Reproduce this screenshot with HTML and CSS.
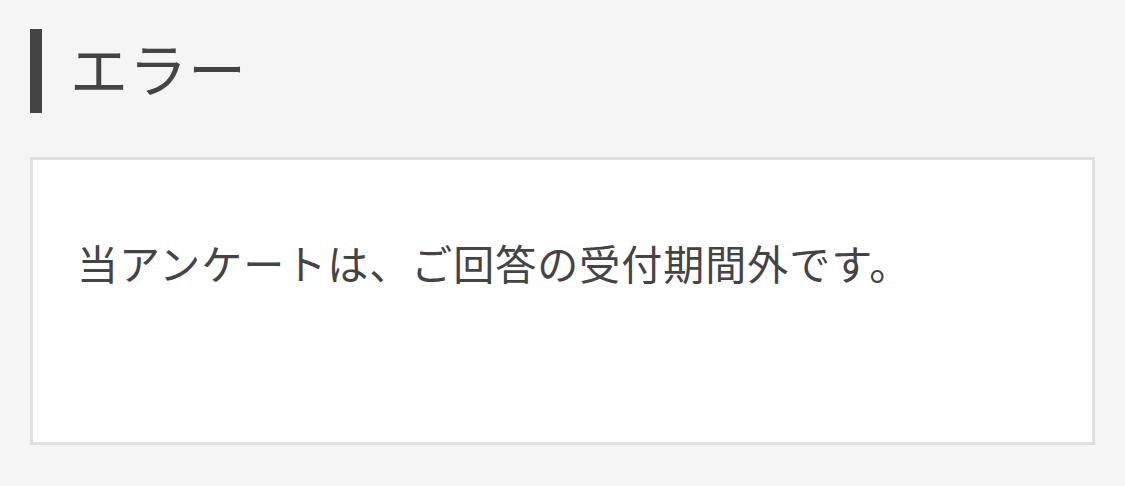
FILE: index.html
```html
<!DOCTYPE html>
<html lang="ja">
<head>
<meta charset="utf-8">
<link rel="stylesheet" href="styles.css">
</head>
<body>
<main class="page">
  <h1 class="title"><span class="title-bar"></span><span class="title-text">エラー</span></h1>
  <section class="message-box">
    <p class="message">当アンケートは、ご回答の受付期間外です。</p>
  </section>
</main>
</body>
</html>
```
FILE: styles.css
```css
html, body {
  margin: 0;
  padding: 0;
  background: #f5f5f5;
}
body {
  font-family: "Noto Sans CJK JP", "Noto Sans", sans-serif;
  color: #444;
}
.page {
  padding: 29px 30px 0 30px;
}
.title {
  display: flex;
  align-items: center;
  gap: 28px;
  margin: 0;
  height: 84px;
  font-weight: 400;
}
.title-bar {
  width: 12px;
  height: 84px;
  background: #444;
  flex: none;
}
.title-text {
  font-size: 58px;
  letter-spacing: 1px;
  line-height: 1;
  color: #444;
  margin-top: -8px;
}
.message-box {
  margin-top: 44px;
  background: #fff;
  border: 3px solid #e0e0e0;
  padding: 72px 44px 0 44px;
  box-sizing: border-box;
  height: 288px;
}
.message {
  margin: 0;
  font-size: 41px;
  letter-spacing: 1px;
  line-height: 60px;
  color: #444;
}
```
